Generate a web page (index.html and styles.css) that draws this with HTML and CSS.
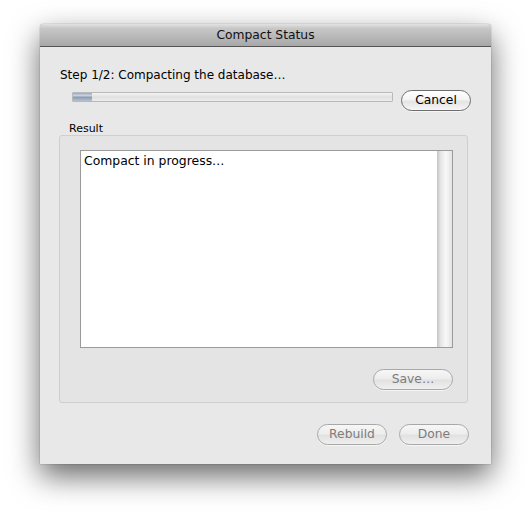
FILE: index.html
```html
<!DOCTYPE html>
<html>
<head>
<meta charset="utf-8">
<link rel="stylesheet" href="styles.css">
</head>
<body>
<div class="window">
  <div class="titlebar">Compact Status</div>
  <div class="content">
    <div class="step">Step 1/2: Compacting the database…</div>
    <div class="progress-row">
      <div class="progress"><div class="progress-fill"></div></div>
      <button class="btn btn-cancel">Cancel</button>
    </div>
    <div class="result-label">Result</div>
    <div class="group">
      <div class="textarea">
        <div class="text">Compact in progress…</div>
        <div class="scrolltrack"></div>
      </div>
      <div class="save-row">
        <button class="btn btn-disabled btn-save">Save…</button>
      </div>
    </div>
    <div class="bottom-row">
      <button class="btn btn-disabled">Rebuild</button>
      <button class="btn btn-disabled">Done</button>
    </div>
  </div>
</div>
</body>
</html>
```

FILE: styles.css
```css
html, body {
  margin: 0;
  padding: 0;
  background: #ffffff;
}
html {
  height: 100%;
}
body {
  box-sizing: border-box;
  min-height: 519px;
  padding: 24px 0 0 40px;
  font-family: "DejaVu Sans", "Liberation Sans", sans-serif;
  color: #000;
}
.window {
  width: 451px;
  height: 440px;
  background: #e8e8e8;
  box-shadow: 0 12px 30px rgba(0,0,0,0.6), 0 0 1px rgba(0,0,0,0.7);
  border-radius: 4px 4px 0 0;
  display: flex;
  flex-direction: column;
}
.titlebar {
  height: 22px;
  border-bottom: 1px solid #555555;
  border-radius: 4px 4px 0 0;
  background: linear-gradient(#e2e2e2 0%, #c7c7c7 20%, #a7a7a7 100%);
  text-align: center;
  font-size: 12.3px;
  line-height: 23px;
  color: #111;
}
.content {
  flex: 1;
  display: flex;
  flex-direction: column;
  padding: 0;
}
.step {
  margin: 21px 0 0 20px;
  font-size: 12px;
  line-height: 15px;
  height: 15px;
}
.progress-row {
  display: flex;
  align-items: flex-start;
  margin: 7px 0 0 32px;
  height: 21px;
}
.progress {
  margin-top: 2px;
  width: 319px;
  height: 8px;
  border: 1px solid #b9b9b9;
  border-radius: 1px;
  background: linear-gradient(#f4f4f4, #e0e0e0 50%, #ededed);
}
.progress-fill {
  width: 19px;
  height: 8px;
  background: linear-gradient(#9aa8bc 0%, #c9d3e0 30%, #8d9db3 55%, #b7c3d3 100%);
}
.btn {
  font-family: "DejaVu Sans", "Liberation Sans", sans-serif;
  font-size: 12.3px;
  height: 21px;
  width: 70px;
  padding: 0;
  border-radius: 11px;
  border: 1px solid #6e6e6e;
  background: linear-gradient(#ffffff 0%, #f4f4f4 45%, #e4e4e4 55%, #f6f6f6 100%);
  color: #000;
  line-height: 19px;
  box-shadow: 0 1px 0 rgba(255,255,255,0.6);
}
.btn-cancel {
  margin-left: 8px;
}
.btn-disabled {
  color: #7d7d7d;
  border-color: #a8a8a8;
  background: linear-gradient(#f7f7f7 0%, #ededed 45%, #e2e2e2 55%, #efefef 100%);
}
.result-label {
  margin: 11px 0 0 29px;
  font-size: 11px;
  line-height: 13px;
  height: 13px;
}
.group {
  margin: 0 0 0 19px;
  width: 407px;
  height: 266px;
  border: 1px solid #cfcfcf;
  border-radius: 3px;
  background: #e4e4e4;
  display: flex;
  flex-direction: column;
}
.textarea {
  margin: 14px 0 0 20px;
  width: 371px;
  height: 196px;
  border: 1px solid #9b9b9b;
  background: #ffffff;
  display: flex;
  justify-content: space-between;
}
.text {
  padding: 2px 0 0 3px;
  font-size: 12.4px;
  line-height: 15px;
}
.scrolltrack {
  width: 15px;
  background: linear-gradient(90deg, #c4c4c4 0%, #e6e6e6 25%, #f8f8f8 60%, #e2e2e2 100%);
}
.save-row {
  display: flex;
  justify-content: flex-end;
  margin: 21px 14px 0 0;
}
.btn-save {
  width: 80px;
}
.bottom-row {
  display: flex;
  justify-content: flex-end;
  gap: 12px;
  margin: 21px 22px 0 0;
}
```
